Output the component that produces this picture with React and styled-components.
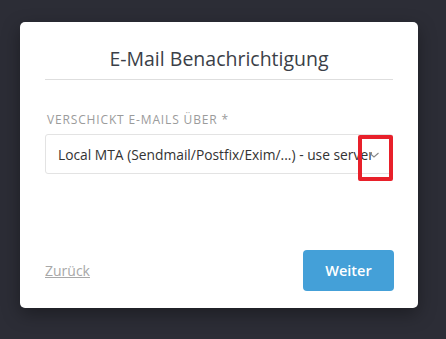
import React from 'react';
import styled, { createGlobalStyle } from 'styled-components';

const GlobalStyle = createGlobalStyle`
  html, body {
    margin: 0;
    padding: 0;
    background: #2c2d36;
    font-family: "Open Sans", "Noto Sans", sans-serif;
  }
`;

const Page = styled.div`
  width: 446px;
  height: 339px;
  padding: 22px 0 0 20px;
  box-sizing: border-box;
`;

const Card = styled.div`
  width: 398px;
  height: 286px;
  box-sizing: border-box;
  background: #fff;
  border-radius: 5px;
  box-shadow: 0 6px 18px rgba(0, 0, 0, 0.35);
  padding: 0 25px 17px;
  display: flex;
  flex-direction: column;
`;

const Header = styled.div`
  padding: 25px 0 8px;
  border-bottom: 1px solid #dedede;
  text-align: center;
`;

const Title = styled.h1`
  margin: 0;
  font-size: 19.5px;
  line-height: 24px;
  font-weight: 400;
  color: #3b3f48;
`;

const Body = styled.div`
  flex: 1;
  padding-top: 32px;
`;

const Label = styled.div`
  font-size: 12px;
  line-height: 16px;
  letter-spacing: 0.85px;
  text-transform: uppercase;
  color: #9b9b9b;
  padding-left: 2px;
  margin-bottom: 6px;
`;

const Field = styled.div`
  position: relative;
`;

const Select = styled.div`
  height: 40px;
  box-sizing: border-box;
  border: 1px solid #e3e3e3;
  border-radius: 3px;
  display: flex;
  align-items: center;
  padding: 0 13px 0 12px;
  color: #333;
  font-size: 13.8px;
`;

const Value = styled.span`
  flex: 1;
  min-width: 0;
  white-space: nowrap;
  overflow: hidden;
`;

const Chevron = styled.svg`
  flex: none;
  width: 10px;
  height: 6px;
  margin-left: -3px;
  margin-top: 1px;
`;

const Highlight = styled.div`
  position: absolute;
  left: 313px;
  top: 1px;
  width: 35px;
  height: 46px;
  box-sizing: border-box;
  border: 4px solid #e8202a;
  border-radius: 2px;
`;

const Footer = styled.div`
  display: flex;
  justify-content: space-between;
  align-items: center;
`;

const BackLink = styled.a`
  font-size: 14px;
  color: #a8a8a8;
  text-decoration: underline;
  cursor: pointer;
`;

const Button = styled.button`
  width: 91px;
  height: 41px;
  border: none;
  border-radius: 4px;
  background: #44a0d8;
  color: #fff;
  font-family: inherit;
  font-size: 14.5px;
  font-weight: 600;
  margin-right: -1px;
  cursor: pointer;
`;

export default function App() {
  return (
    <Page>
      <GlobalStyle />
      <Card>
        <Header>
          <Title>E-Mail Benachrichtigung</Title>
        </Header>
        <Body>
          <Label>Verschickt E-Mails über *</Label>
          <Field>
            <Select>
              <Value>Local MTA (Sendmail/Postfix/Exim/...) - use server setting</Value>
              <Chevron viewBox="0 0 10 6">
                <path d="M0.5 1l4.5 4 4.5-4" fill="none" stroke="#888" strokeWidth="1.1" />
              </Chevron>
            </Select>
            <Highlight />
          </Field>
        </Body>
        <Footer>
          <BackLink>Zurück</BackLink>
          <Button>Weiter</Button>
        </Footer>
      </Card>
    </Page>
  );
}
